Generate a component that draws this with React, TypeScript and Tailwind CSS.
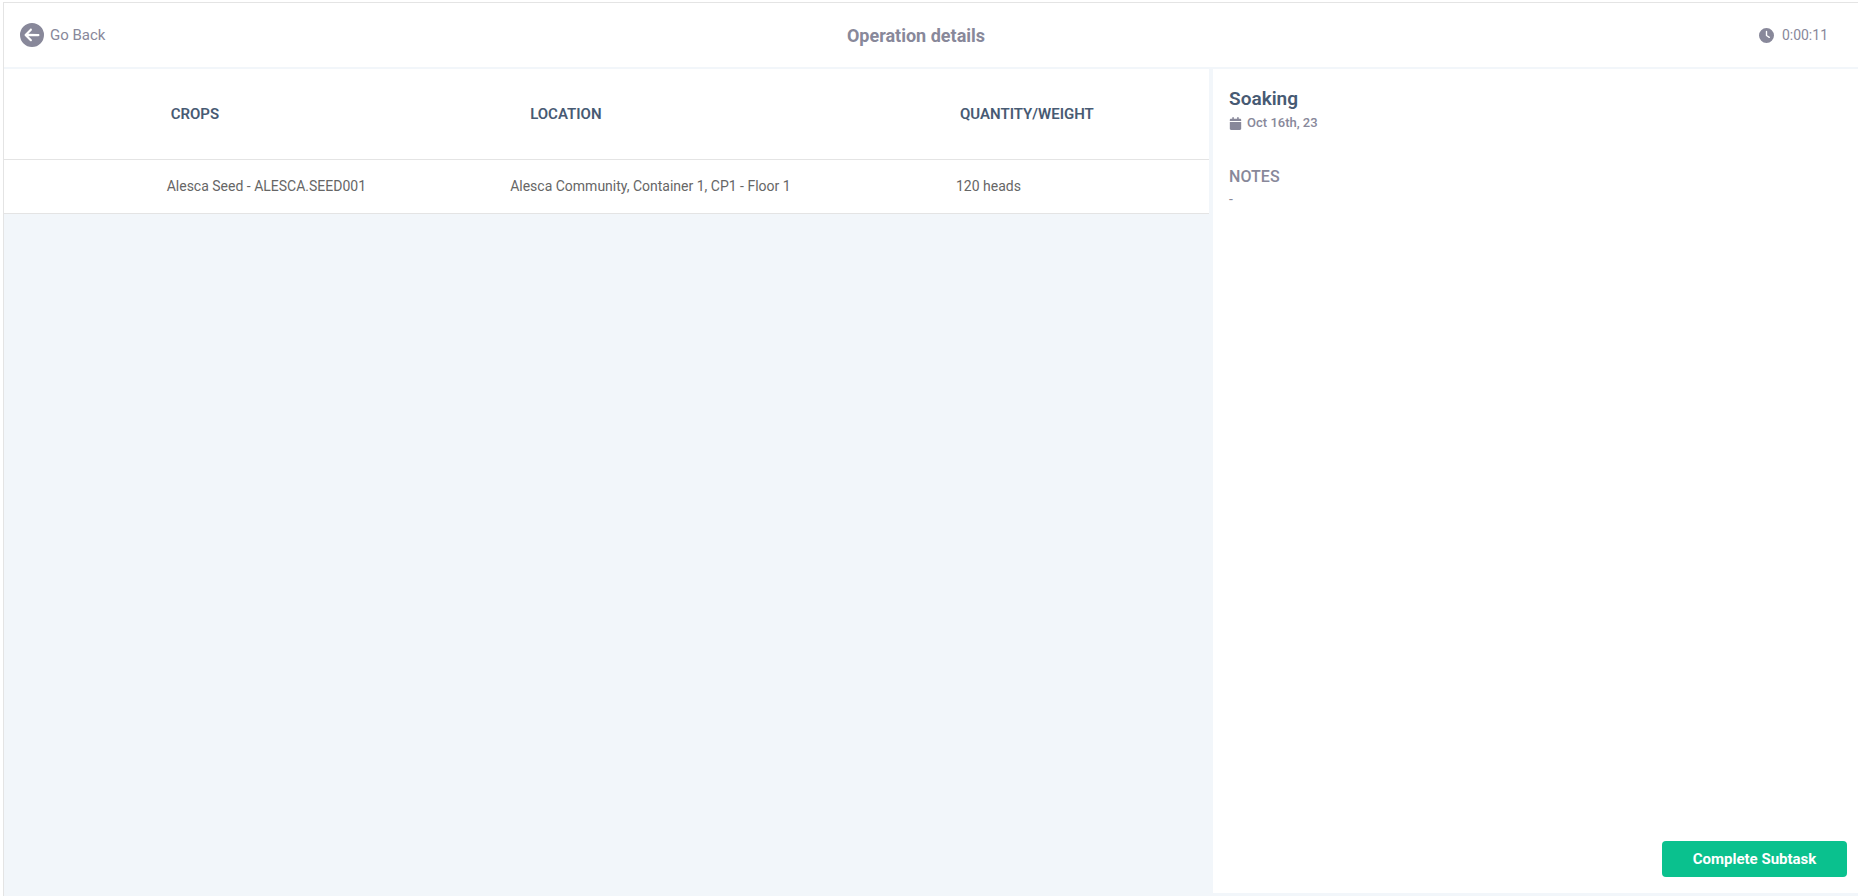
import { FaCalendar, FaCircleArrowLeft, FaClock } from 'react-icons/fa6'

interface ICrop {
    name: string
    location: string
    quantity: string
}

interface IHeaderProps {
    title: string
    time: string
}

interface ISubtaskProps {
    name: string
    date: string
    notes: string
}

const crops: ICrop[] = [
    {
        name: 'Alesca Seed - ALESCA.SEED001',
        location: 'Alesca Community, Container 1, CP1 - Floor 1',
        quantity: '120 heads',
    },
]

function Header({ title, time }: IHeaderProps) {
    return (
        <header className="grid grid-cols-3 items-center h-[66px] pl-4 pr-[30px] border-b-2 border-[#f2f6fa] text-[#88889a]">
            <button className="flex items-center gap-[6px] text-[15px] justify-self-start cursor-pointer">
                <FaCircleArrowLeft size={24} />
                Go Back
            </button>
            <h1 className="pt-[2px] pr-4 text-lg font-bold text-center">{title}</h1>
            <div className="flex items-center gap-2 text-sm justify-self-end">
                <FaClock size={15} />
                <span>{time}</span>
            </div>
        </header>
    )
}

function CropsTable() {
    return (
        <table className="w-full table-fixed border-collapse bg-white text-left">
            <colgroup>
                <col className="w-[13.5%]" />
                <col className="w-[28.5%]" />
                <col className="w-[37%]" />
                <col className="w-[21%]" />
            </colgroup>
            <thead>
                <tr className="h-[90px] border-b border-[#e4e4e4] text-[15px] text-[#475a73]">
                    <td></td>
                    <th className="font-semibold pl-1">CROPS</th>
                    <th className="font-semibold pl-5">LOCATION</th>
                    <th className="font-semibold pl-1">QUANTITY/WEIGHT</th>
                </tr>
            </thead>
            <tbody>
                {crops.map((crop) => (
                    <tr key={crop.name} className="h-[54px] border-b border-[#e4e4e4] text-sm text-[#666666]">
                        <td></td>
                        <td>{crop.name}</td>
                        <td>{crop.location}</td>
                        <td>{crop.quantity}</td>
                    </tr>
                ))}
            </tbody>
        </table>
    )
}

function SubtaskPanel({ name, date, notes }: ISubtaskProps) {
    return (
        <aside className="flex flex-col flex-1 ml-1 mb-[3px] pl-4 pr-[11px] py-4 bg-white text-[#88889a]">
            <h2 className="text-[19px] leading-7 font-semibold text-[#475a73]">{name}</h2>
            <div className="flex items-center gap-[5px] text-[13px] leading-5 font-medium">
                <FaCalendar size={13} />
                <span>{date}</span>
            </div>
            <h3 className="mt-8 text-base leading-6 font-medium">NOTES</h3>
            <p className="text-sm leading-5">{notes}</p>
            <button className="mt-auto self-end h-9 w-[185px] rounded bg-[#0ac18e] text-[15px] font-bold text-white cursor-pointer">
                Complete Subtask
            </button>
        </aside>
    )
}

function App() {
    return (
        <div className="flex flex-col min-h-screen pt-[2px] pl-[3px] bg-white font-[Roboto,sans-serif]">
            <div className="flex flex-col flex-1 border-t border-l border-[#e4e4e4]">
                <Header title="Operation details" time="0:00:11" />
                <main className="flex flex-1 bg-[#f2f6fa]">
                    <section className="w-[65%]">
                        <CropsTable />
                    </section>
                    <SubtaskPanel name="Soaking" date="Oct 16th, 23" notes="-" />
                </main>
            </div>
        </div>
    )
}

export default App
